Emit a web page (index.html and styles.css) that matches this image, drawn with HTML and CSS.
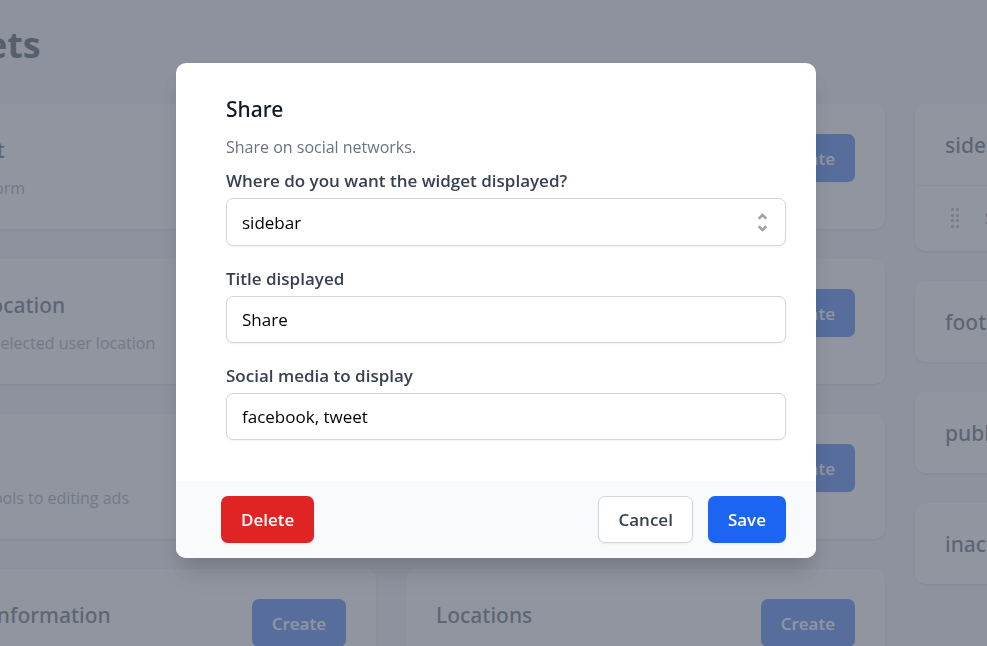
FILE: index.html
```html
<!DOCTYPE html>
<html lang="en">
<head>
<meta charset="utf-8">
<meta name="viewport" content="width=device-width, initial-scale=1">
<title>Widgets</title>
<link rel="stylesheet" href="styles.css">
</head>
<body>
<div class="page" inert>
  <h1 class="page-title">Widgets</h1>
  <div class="columns">
    <section class="widgets">
      <article class="card"><div class="card-text"><h2>Contact</h2><p>Contact form</p></div><button class="btn btn-primary" type="button">Create</button></article>
      <article class="card"><div class="card-text"><h2>Links</h2><p>List</p></div><button class="btn btn-primary" type="button">Create</button></article>
      <article class="card"><div class="card-text"><h2>User Location</h2><p>Displays selected user location</p></div><button class="btn btn-primary" type="button">Create</button></article>
      <article class="card"><div class="card-text"><h2>Text</h2><p>Text</p></div><button class="btn btn-primary" type="button">Create</button></article>
      <article class="card"><div class="card-text"><h2>Ads</h2><p>Various tools to editing ads</p></div><button class="btn btn-primary" type="button">Create</button></article>
      <article class="card"><div class="card-text"><h2>Search</h2><p>Search</p></div><button class="btn btn-primary" type="button">Create</button></article>
      <article class="card"><div class="card-text"><h2>Other information</h2><p>Display all information related</p></div><button class="btn btn-primary" type="button">Create</button></article>
      <article class="card"><div class="card-text"><h2>Locations</h2><p>List of locations</p></div><button class="btn btn-primary" type="button">Create</button></article>
    </section>
    <aside class="zones">
      <section class="zone">
        <h2>sidebar</h2>
        <div class="zone-item">
          <svg class="grip" width="10" height="22" viewBox="0 0 10 22" aria-hidden="true"><rect x="1" y="0" width="3" height="3" rx="1"/><rect x="6" y="0" width="3" height="3" rx="1"/><rect x="1" y="6" width="3" height="3" rx="1"/><rect x="6" y="6" width="3" height="3" rx="1"/><rect x="1" y="11" width="3" height="3" rx="1"/><rect x="6" y="11" width="3" height="3" rx="1"/><rect x="1" y="17" width="3" height="3" rx="1"/><rect x="6" y="17" width="3" height="3" rx="1"/></svg>
          <span>Share</span>
        </div>
      </section>
      <section class="zone"><h2>footer</h2></section>
      <section class="zone"><h2>publish</h2></section>
      <section class="zone"><h2>inactive</h2></section>
    </aside>
  </div>
</div>

<div class="overlay">
  <form class="modal" role="dialog" aria-modal="true" aria-labelledby="modal-title">
    <div class="modal-body">
      <h2 class="modal-title" id="modal-title">Share</h2>
      <p class="modal-intro">Share on social networks.</p>
      <div class="field">
        <label for="zone">Where do you want the widget displayed?</label>
        <div class="select-wrap">
          <select class="control" id="zone"><option>sidebar</option><option>footer</option><option>publish</option><option>inactive</option></select>
          <svg class="chevrons" viewBox="0 0 20 20" aria-hidden="true"><path d="M7 7l3-3 3 3m0 6l-3 3-3-3"/></svg>
        </div>
      </div>
      <div class="field">
        <label for="title">Title displayed</label>
        <input class="control" id="title" type="text" value="Share">
      </div>
      <div class="field">
        <label for="media">Social media to display</label>
        <input class="control" id="media" type="text" value="facebook, tweet">
      </div>
    </div>
    <div class="modal-footer">
      <button class="btn btn-danger" type="button">Delete</button>
      <button class="btn btn-plain" type="button">Cancel</button>
      <button class="btn btn-primary" type="submit">Save</button>
    </div>
  </form>
</div>
</body>
</html>
```

FILE: styles.css
```css
*, *::before, *::after { box-sizing: border-box; }

body {
  margin: 0;
  height: 100vh;
  overflow: hidden;
  background: #f1f3f7;
  color: #374151;
  font-family: "Open Sans", "Noto Sans", sans-serif;
  font-size: 16px;
  line-height: 25px;
}

h1, h2, p { margin: 0; }

button, input, select { font: inherit; }

.page {
  width: calc(100% + 510px);
  margin-left: -103px;
  padding-top: 20px;
}

.page-title {
  color: #1f2937;
  font-size: 36px;
  font-weight: 700;
  line-height: 50px;
  margin-bottom: 34px;
}

.columns {
  display: grid;
  grid-template-columns: repeat(3, minmax(0, 1fr));
  gap: 30px;
}

.widgets {
  grid-column: span 2;
  display: grid;
  grid-template-columns: repeat(2, minmax(0, 1fr));
  align-content: start;
  gap: 30px;
}

.card,
.zone {
  background: #fff;
  border-radius: 10px;
  box-shadow: 0 1px 3px rgba(0, 0, 0, .1), 0 1px 2px rgba(0, 0, 0, .06);
}

.card {
  display: flex;
  justify-content: space-between;
  align-items: flex-start;
  height: 125px;
  padding: 30px;
}

.card h2,
.zone h2 {
  color: #374151;
  font-family: "Noto Sans", "Open Sans", sans-serif;
  font-size: 21px;
  font-weight: 500;
  line-height: 32px;
}

.card p {
  margin-top: 10px;
  color: #6b7280;
  opacity: .8;
  white-space: nowrap;
}

.zones {
  display: flex;
  flex-direction: column;
  gap: 30px;
}

.zone h2 { padding: 25px 30px 24px; }

.zone-item {
  display: flex;
  align-items: center;
  gap: 25px;
  height: 66px;
  padding: 0 35px;
  border-top: 1px solid #e5e7eb;
}

.grip { fill: #9ca3af; }

.btn {
  height: 47px;
  padding: 0 19px;
  border: 1px solid transparent;
  border-radius: 7px;
  box-shadow: 0 1px 2px rgba(0, 0, 0, .05);
  color: #fff;
  font-size: 17px;
  font-weight: 600;
  line-height: 25px;
  white-space: nowrap;
}

.card .btn { height: 48px; }

.btn-primary { background: #1c64f2; }
.btn-danger { background: #e02424; margin-right: auto; }
.btn-plain { background: #fff; border-color: #d1d5db; color: #374151; }

.overlay {
  position: fixed;
  inset: 0;
  display: flex;
  justify-content: center;
  align-items: flex-start;
  padding: 63px 15px 20px 20px;
  background: rgba(107, 114, 128, .75);
}

.modal {
  width: 100%;
  max-width: 640px;
  overflow: hidden;
  border-radius: 10px;
  background: #fff;
  box-shadow: 0 20px 25px -5px rgba(0, 0, 0, .1), 0 10px 20px -5px rgba(0, 0, 0, .1);
}

.modal-body { padding: 30px 30px 41px 50px; }

.modal-title {
  color: #111827;
  font-family: "Noto Sans", "Open Sans", sans-serif;
  font-size: 21px;
  font-weight: 500;
  line-height: 32px;
}

.modal-intro {
  margin: 10px 0 8px;
  color: #6b7280;
}

.field + .field { margin-top: 20px; }

.field label {
  display: block;
  margin-bottom: 4px;
  font-size: 17px;
  font-weight: 600;
  line-height: 26px;
}

.control {
  display: block;
  width: 100%;
  height: 47px;
  padding: 0 15px;
  border: 1px solid #d1d5db;
  border-radius: 7px;
  background: #fff;
  box-shadow: 0 1px 2px rgba(0, 0, 0, .05);
  color: #000;
  font-size: 17px;
  appearance: none;
}

select.control { height: 48px; }

.select-wrap { position: relative; }

.chevrons {
  position: absolute;
  top: 12px;
  right: 11px;
  width: 25px;
  height: 25px;
  fill: none;
  stroke: #9ca3af;
  stroke-width: 2;
  pointer-events: none;
}

.modal-footer {
  display: flex;
  gap: 15px;
  padding: 15px 30px 15px 45px;
  background: #f9fafb;
}
```
